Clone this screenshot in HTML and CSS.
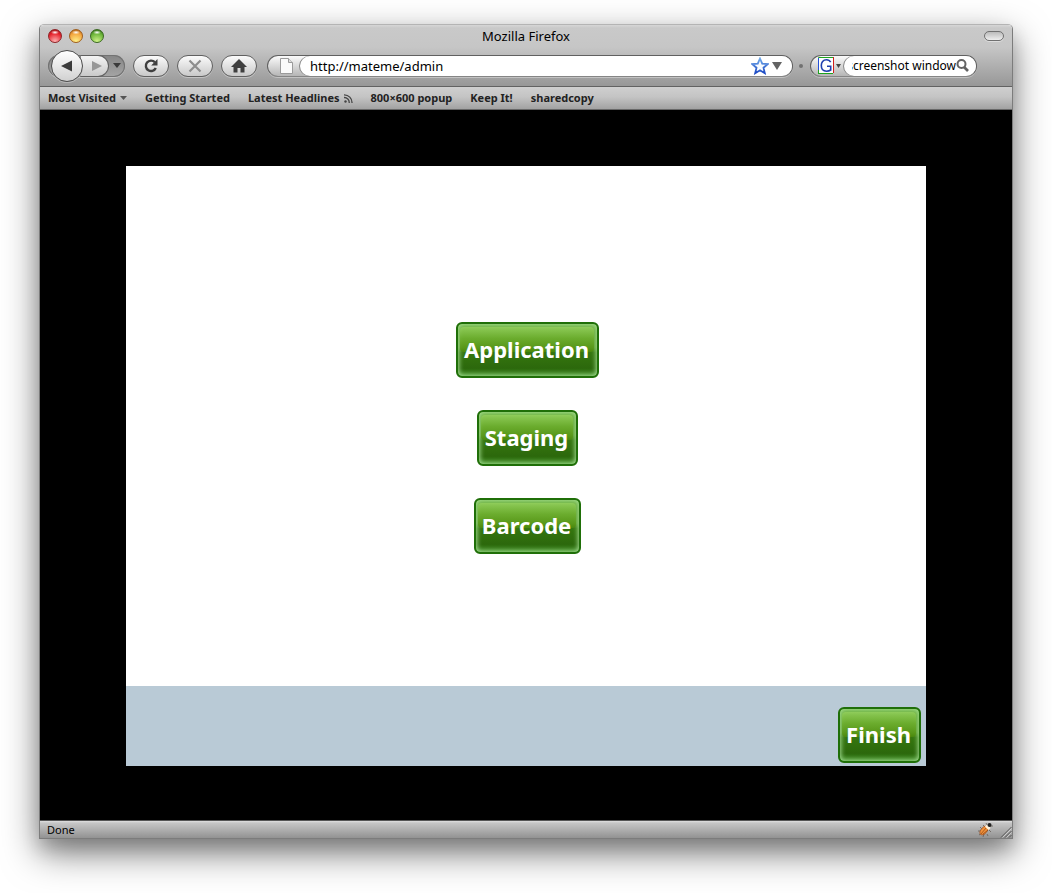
FILE: index.html
```html
<!DOCTYPE html>
<html lang="en">
<head>
<meta charset="utf-8">
<title>Mozilla Firefox</title>
<link rel="stylesheet" href="styles.css">
</head>
<body>
<div class="window">
  <header class="chrome">
    <div class="titlebar">
      <div class="lights">
        <button class="light light-red" aria-label="Close"></button>
        <button class="light light-yellow" aria-label="Minimize"></button>
        <button class="light light-green" aria-label="Zoom"></button>
      </div>
      <span class="title">Mozilla Firefox</span>
      <button class="pill" aria-label="Toggle toolbar"></button>
    </div>
    <nav class="toolbar" aria-label="Navigation">
      <div class="history">
        <button class="back" aria-label="Back"><svg width="12" height="12" viewBox="0 0 12 12"><path d="M0 6 11 0.500V11.500Z" fill="#3c3c3c"/></svg></button>
        <button class="forward" aria-label="Forward"><svg width="10" height="10" viewBox="0 0 10 10"><path d="M10 5 0 0V10Z" fill="#979797"/></svg></button>
        <button class="recent" aria-label="Recent pages"><svg width="8" height="5" viewBox="0 0 8 5"><path d="M0 0H8L4 5Z" fill="#3a3a3a"/></svg></button>
      </div>
      <button class="tool" aria-label="Reload"><svg width="16" height="16" viewBox="0 0 16 16"><path d="M11.800 4.200A5.200 5.200 0 1 0 12.800 10" fill="none" stroke="#3f3f3f" stroke-width="2.400"/><path d="M14.500 1V7.500H8.200Z" fill="#3f3f3f"/></svg></button>
      <button class="tool" aria-label="Stop"><svg width="14" height="14" viewBox="0 0 14 14"><path d="M1.500 1.500 12.500 12.500M12.500 1.500 1.500 12.500" stroke="#8d8d8d" stroke-width="2.200"/></svg></button>
      <button class="tool" aria-label="Home"><svg width="16" height="14" viewBox="0 0 16 14"><path d="M8 0 16 8H13.500V13.500H9.500V9H6.500V13.500H2.500V8H0Z" fill="#3f3f3f"/></svg></button>
      <div class="address">
        <svg class="page-icon" width="13" height="16" viewBox="0 0 13 16"><path d="M.5.5H8.500L12.500 4.500V15.500H.5Z" fill="#fafafa" stroke="#9a9a9a"/><path d="M8.500.5V4.500H12.500" fill="#ddd" stroke="#9a9a9a"/></svg>
        <div class="address-field">
          <input class="url" type="text" value="http://mateme/admin" aria-label="Address">
          <svg width="18" height="18" viewBox="0 0 18 18"><defs><linearGradient id="star" x2="0" y2="1"><stop stop-color="#6fa8e8"/><stop offset="1" stop-color="#1c49c4"/></linearGradient></defs><path d="M9 1.500 11.200 6.600 16.700 7.100 12.500 10.700 13.800 16.200 9 13.300 4.200 16.200 5.500 10.700 1.300 7.100 6.800 6.600Z" fill="#f7fbff" stroke="url(#star)" stroke-width="1.800"/></svg>
          <svg width="10" height="8" viewBox="0 0 10 8"><path d="M0 0H10L5 8Z" fill="#636363"/></svg>
        </div>
      </div>
      <span class="grip"></span>
      <div class="search">
        <svg width="16" height="17" viewBox="0 0 16 17"><path d="M.5 16V.5H15" fill="none" stroke="#1ea21e"/><path d="M15.500 0V16" stroke="#d11d1d"/><path d="M0 16.500H15" stroke="#1ea21e"/><path d="M.5 1V13" stroke="#2451d8"/><rect x="1" y="1" width="14" height="15" fill="#fff"/><path d="M12.700 5.200C11.500 3 9.800 2.700 8.500 2.700 5 2.700 3.300 5.300 3.300 8.500 3.300 12 5.300 14.200 8.500 14.200 10.300 14.200 11.800 13.700 12.700 13V9.200H9" fill="none" stroke="#1f3fae" stroke-width="1.600"/></svg>
        <svg class="engine-arrow" width="5" height="4" viewBox="0 0 5 4"><path d="M0 0H5L2.500 4Z" fill="#444"/></svg>
        <div class="search-field">
          <input class="query" type="text" value="screenshot window" aria-label="Search">
          <svg width="13" height="14" viewBox="0 0 13 14"><circle cx="5.500" cy="5" r="4" fill="none" stroke="#636363" stroke-width="2"/><path d="M8 8 12 12" stroke="#636363" stroke-width="2.600"/></svg>
        </div>
      </div>
    </nav>
    <nav class="bookmarks" aria-label="Bookmarks">
      <a href="#">Most Visited<svg width="7" height="4" viewBox="0 0 7 4"><path d="M0 0H7L3.500 4Z" fill="#555"/></svg></a>
      <a href="#">Getting Started</a>
      <a href="#">Latest Headlines<svg width="9" height="9" viewBox="0 0 9 9"><circle cx="1.500" cy="7.500" r="1.200" fill="#444"/><path d="M0 3.500A5 5 0 0 1 5.200 9M0 .8A7.800 7.800 0 0 1 8 9" fill="none" stroke="#444" stroke-width="1.300"/></svg></a>
      <a href="#">800×600 popup</a>
      <a href="#">Keep It!</a>
      <a href="#">sharedcopy</a>
    </nav>
  </header>
  <main class="viewport">
    <section class="panel">
      <div class="choices">
        <button class="green">Application</button>
        <button class="green">Staging</button>
        <button class="green">Barcode</button>
      </div>
      <div class="actions"><button class="green">Finish</button></div>
    </section>
  </main>
  <footer class="status">
    <span class="status-text">Done</span>
    <svg class="bug" width="16" height="16" viewBox="0 0 16 16"><path d="M3 5 5 7M6 3 8 5M1 9H4M2 13 5 11M6 15 7 12M10 12 11 14M12 8 14 10M10 3 9 1M13 4H16" stroke="#665d55" fill="none" stroke-width=".8"/><ellipse cx="7" cy="8.500" rx="3" ry="5.200" transform="rotate(42 7 8.500)" fill="#f0913a" stroke="#a3501a" stroke-width=".7"/><path d="M9 6 4 12M11 8 6 12" stroke="#8c4313" stroke-width=".7"/><path d="M9 3.500 12.500 7" stroke="#fff3dc" stroke-width="3"/><circle cx="12.500" cy="3" r="2" fill="#222"/></svg>
    <svg class="resize" width="12" height="12" viewBox="0 0 12 12"><path d="M1 11.500 11.500 1M5 11.500 11.500 5M9 11.500 11.500 9" stroke="#555"/><path d="M2.500 11.500 11.500 2.500M6.500 11.500 11.500 6.500" stroke="#ddd" stroke-width=".7"/></svg>
  </footer>
</div>
</body>
</html>
```
FILE: styles.css
```css
* { box-sizing: border-box; }

body {
  margin: 0;
  min-height: 100vh;
  padding: 24px 39px 54px;
  display: flex;
  flex-direction: column;
  background: #fff;
  color: #000;
  font-family: "Noto Sans", "Open Sans", sans-serif;
}

button, input { font: inherit; margin: 0; padding: 0; border: 0; }
input { background: transparent; min-width: 0; outline: 0; color: #000; }
svg { flex: none; display: block; }

.window {
  flex: 1;
  display: flex;
  flex-direction: column;
  border: 1px solid #7c7c7c;
  border-top-color: #b4b4b4;
  border-radius: 5px 5px 0 0;
  box-shadow: 0 14px 36px rgba(0, 0, 0, 0.5), 0 10px 18px rgba(0, 0, 0, 0.15);
}

.chrome {
  border-radius: 4px 4px 0 0;
  background: linear-gradient(#d6d6d6, #c9c9c9 3px, #c6c6c6 22px, #969696 62px);
}

.titlebar {
  height: 22px;
  padding: 0 8px;
  display: grid;
  grid-template-columns: 1fr auto 1fr;
  align-items: center;
}
.lights { display: flex; gap: 7px; }
.light {
  width: 14px;
  height: 14px;
  border: 1px solid;
  border-radius: 50%;
}
.light-red {
  border-color: #8e2226;
  background: radial-gradient(ellipse 4px 2px at 50% 20%, #fff, transparent), radial-gradient(circle at 50% 95%, #ffb5b5, #e5202a 65%, #8e1518);
}
.light-yellow {
  border-color: #a05e1c;
  background: radial-gradient(ellipse 4px 2px at 50% 20%, #fff, transparent), radial-gradient(circle at 50% 95%, #fff38c, #f3a33c 65%, #9c5010);
}
.light-green {
  border-color: #3a6a20;
  background: radial-gradient(ellipse 4px 2px at 50% 20%, #fff, transparent), radial-gradient(circle at 50% 95%, #d2f58c, #68b236 65%, #285a10);
}
.title { font-size: 13px; line-height: 22px; }
.pill {
  justify-self: end;
  width: 20px;
  height: 10px;
  border: 1px solid #707070;
  border-radius: 5px;
  background: linear-gradient(#bbb, #eee);
  box-shadow: 0 1px 0 #ddd;
}

.toolbar {
  height: 39px;
  padding: 0 35px 2px 8px;
  display: flex;
  align-items: center;
}
.history {
  height: 22px;
  margin-right: 8px;
  display: flex;
  align-items: center;
  border-radius: 11px;
  background: linear-gradient(#858585, #a5a5a5);
  box-shadow: inset 0 0 0 1px #727272, 0 1px 0 #c2c2c2;
}
.back {
  width: 32px;
  height: 32px;
  margin-left: 3px;
  display: grid;
  place-items: center;
  position: relative;
  border: 1px solid #4c4c4c;
  border-radius: 50%;
  background: linear-gradient(#fff, #e8e8e8 50%, #d0d0d0);
  box-shadow: 0 1px 0 #b8b8b8;
}
.forward {
  width: 28px;
  height: 22px;
  margin-left: -2px;
  padding-left: 4px;
  display: grid;
  place-items: center;
  border: 1px solid #606060;
  border-left: 0;
  border-radius: 0 11px 11px 0;
  background: linear-gradient(#f4f4f4, #c9c9c9);
}
.recent { width: 16px; height: 22px; display: grid; place-items: center; background: transparent; }
.tool {
  width: 36px;
  height: 22px;
  margin-right: 8px;
  display: grid;
  place-items: center;
  border: 1px solid #606060;
  border-radius: 11px;
  background: linear-gradient(#fbfbfb, #c9c9c9);
  box-shadow: 0 1px 0 #c2c2c2;
}

.address, .search {
  height: 22px;
  display: flex;
  align-items: center;
  border: 1px solid #606060;
  border-bottom-color: #858585;
  border-radius: 11px;
  background: linear-gradient(#fbfbfb, #b5b5b5);
  box-shadow: 0 1px 0 #c2c2c2;
}
.address { flex: 1; margin-left: 2px; padding-left: 12px; }
.address-field, .search-field {
  flex: 1;
  min-width: 0;
  height: 20px;
  display: flex;
  align-items: center;
  border-radius: 10px;
  background: #fff;
  box-shadow: -1px 0 0 #868686;
  font-size: 13px;
  line-height: 20px;
}
.address-field { margin-left: 7px; padding: 0 10px; }
.url { flex: 1; height: 20px; }
.address-field svg + svg { margin-left: 3px; }
.grip {
  width: 4px;
  height: 4px;
  margin: 0 7px 0 6px;
  border-radius: 50%;
  background: #717171;
}
.search { width: 167px; padding-left: 7px; }
.engine-arrow { margin: 0 3px 0 2px; }
.search-field { padding: 0 7px 0 8px; }
.query { flex: 1; height: 20px; direction: rtl; font-size: 12px; }

.bookmarks {
  height: 24px;
  padding: 0 8px;
  display: flex;
  align-items: center;
  gap: 18px;
  border-top: 1px solid #626262;
  border-bottom: 1px solid #686868;
  background: linear-gradient(#cfcfcf, #c4c4c4 45%, #a2a2a2);
}
.bookmarks a {
  display: flex;
  align-items: center;
  gap: 4px;
  color: #222;
  font-size: 11px;
  font-weight: 700;
  line-height: 22px;
  white-space: nowrap;
  text-decoration: none;
}

.viewport { flex: 1; padding: 56px 0 54px; background: #000; }
.panel {
  width: 100%;
  max-width: 800px;
  height: 100%;
  margin: 0 auto;
  display: flex;
  flex-direction: column;
  background: #fff;
}
.choices {
  flex: 1;
  min-height: 520px;
  padding: 24px 0 0 3px;
  display: flex;
  flex-direction: column;
  align-items: center;
  justify-content: center;
  gap: 32px;
}
.actions {
  height: 80px;
  padding: 0 5px 3px;
  display: flex;
  align-items: flex-end;
  justify-content: flex-end;
  background: #b9cad6;
}
.green {
  position: relative;
  height: 56px;
  padding: 0 8px 2px 6px;
  border: 2px solid #1f6f08;
  border-radius: 6px;
  background: linear-gradient(#6cb03c, #58992a 45%, #35760f 55%, #2c680c 85%, #3d8a22);
  box-shadow: inset 0 0 5px 1px #a6e095;
  color: #fff;
  font-size: 22px;
  font-weight: 700;
  line-height: 50px;
  isolation: isolate;
}
.green::before {
  content: "";
  position: absolute;
  z-index: -1;
  inset: 3px 3px 24px 2px;
  border-radius: 4px;
  background: linear-gradient(rgba(150, 210, 95, 0.8), rgba(110, 175, 45, 0.8) 45%, rgba(78, 140, 10, 0.8));
}

.status {
  height: 18px;
  padding: 0 0 0 7px;
  display: flex;
  align-items: center;
  border-top: 1px solid #555;
  background: linear-gradient(#e0e0e0, #c6c6c6 2px, #929292);
}
.status-text { flex: 1; font-size: 11px; line-height: 17px; }
.resize { margin: 4px 0 0 7px; }
```
